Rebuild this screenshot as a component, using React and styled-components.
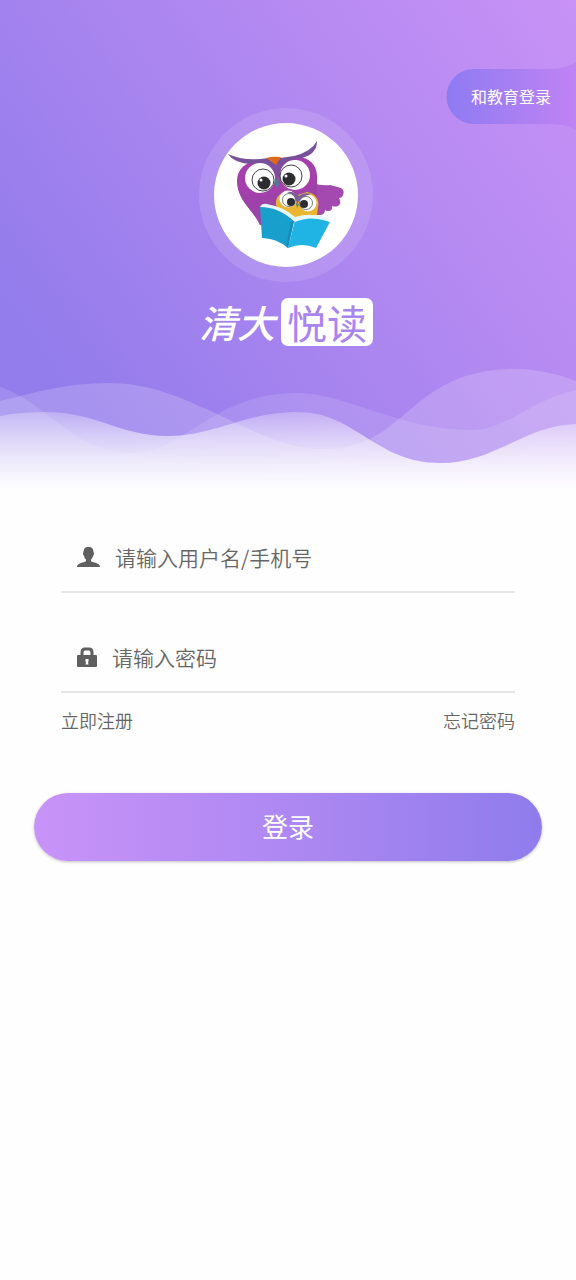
import React from "react";
import styled, { createGlobalStyle } from "styled-components";

const GlobalStyle = createGlobalStyle`
* {
    box-sizing: border-box;
}
body {
    margin: 0;
    background: #fefefe;
    font-family: "Noto Sans CJK SC", "Noto Sans", sans-serif;
}
button, input {
    font-family: inherit;
}`

const OwlLogo = () => (
    <svg width="144" height="144" viewBox="0 0 144 144" aria-hidden="true">
        <circle cx="72" cy="72" r="72" fill="#fff"/>
        {/* wing */}
        <path d="M98 60 Q108 63 116 62 Q124 64 127 65 Q131 68 129 72 Q128 75 125 75 Q128 80 124 83 Q121 84 118 83 Q119 88 114 88 Q112 88 111 87 Q111 91 107 92 L92 92Z" fill="#a349b0"/>
        {/* body */}
        <path d="M46 102 C40 88 23 77 23 58 C23 45 33 38 44 39 L61 37 L76 35 C92 31 103 40 103 53 L103 88 L94 94 L68 104Z" fill="#a53fac"/>
        <path d="M24 65 C32 75 48 75 61 70 C76 74 92 72 103 60 L103 88 L68 104 L46 102 C40 88 27 80 24 65Z" fill="#9c42a8"/>
        <path d="M47 38 Q62 37 84 34 Q70 42 64 56 Q58 43 47 38Z" fill="#814d9f"/>
        {/* brows */}
        <path d="M14 31 Q31 39 54 35 L62 41 Q47 40 35 41 Q19 39 14 31Z" fill="#77509a"/>
        <path d="M103 18 Q97 29 80 33 L66 35 L64 41 Q76 36 88 35 Q103 31 103 18Z" fill="#77509a"/>
        <path d="M52 35 Q59 33 67 34 L62 42Z" fill="#dc681c"/>
        {/* eyes */}
        <circle cx="46" cy="55" r="15" fill="#fff"/>
        <circle cx="81" cy="52" r="15" fill="#fff"/>
        <circle cx="49" cy="57" r="11" fill="#fff" stroke="#414349" strokeWidth="1"/>
        <circle cx="77" cy="53" r="11" fill="#fff" stroke="#414349" strokeWidth="1"/>
        <circle cx="50" cy="60" r="6.500" fill="#2d2c31"/>
        <circle cx="75" cy="56" r="6.500" fill="#2d2c31"/>
        <circle cx="47" cy="57" r="1.500" fill="#fff"/>
        <circle cx="72" cy="53" r="1.500" fill="#fff"/>
        <path d="M63 54 L66 61 L63 65 L60 60Z" fill="#4d7b91"/>
        {/* owlet */}
        <path d="M62 82 C61 73 68 68 76 69 L84 72 L93 69 C101 70 106 77 104 84 L103 92 L81 98 L64 91Z" fill="#eab531"/>
        <circle cx="74" cy="76" r="8.500" fill="#fff"/>
        <circle cx="94" cy="80" r="8.500" fill="#fff"/>
        <path d="M73 69 Q80 68 85 73 Q90 69 97 71 Q87 73 83 81 Q81 71 73 69Z" fill="#77609b"/>
        <circle cx="75" cy="77" r="6.500" fill="#fff" stroke="#414349" strokeWidth="0.700"/>
        <circle cx="92" cy="80" r="6.500" fill="#fff" stroke="#414349" strokeWidth="0.700"/>
        <circle cx="77" cy="79" r="4" fill="#2d2c31"/>
        <circle cx="90" cy="81" r="4" fill="#2d2c31"/>
        <path d="M82 80 L85 81 L83 85Z" fill="#4d7b91"/>
        {/* book */}
        <path d="M46 84 Q65 83 80 98 L74 125 Q62 115 48 115Z" fill="#199fcb"/>
        <path d="M81 97 Q98 92 116 99 L102 125 Q88 119 74 125Z" fill="#20b4e4"/>
        <path d="M46 84 Q48 80 53 81 Q70 84 81 94 Q97 89 114 95 L116 99 Q97 92 81 99 Q65 84 46 84Z" fill="#e4f8fc"/>
        <path d="M80 98 L74 125 L72 123 L77 99Z" fill="#168ebc"/>
    </svg>
)

const Waves = () => (
    <WavesStyle viewBox="0 360 576 130" preserveAspectRatio="none" aria-hidden="true">
        <defs>
            <linearGradient id="fade" gradientUnits="userSpaceOnUse" x1="0" y1="410" x2="0" y2="490">
                <stop offset="0" stopColor="#fff" stopOpacity="0.24"/>
                <stop offset="0.35" stopColor="#fff" stopOpacity="0.56"/>
                <stop offset="0.7" stopColor="#fff" stopOpacity="0.82"/>
                <stop offset="1" stopColor="#fefefe"/>
            </linearGradient>
        </defs>
        <path d="M0 401 C36 392 68 383 108 383 C155 383 190 402 215 413 C255 432 285 449 325 449 C408 449 408 369 515 369 C538 369 560 375 576 381 V490 H0Z" fill="#fff" fillOpacity="0.18"/>
        <path d="M0 387 C48 403 75 453 130 453 C188 453 210 393 298 393 C345 393 400 430 470 430 C508 430 530 400 576 390 V490 H0Z" fill="#fff" fillOpacity="0.12"/>
        <path d="M0 416 C15 413 30 412 45 412 C96 412 120 436 168 436 C215 436 245 412 298 412 C355 412 376 463 440 463 C495 463 525 425 576 424 V490 H0Z" fill="url(#fade)"/>
    </WavesStyle>
)

const UserIcon = () => (
    <svg width="23" height="20" viewBox="0 0 23 20" fill="#5f5f5f" aria-hidden="true">
        <path d="M11.500 0 C15 0 16.500 2 16.500 5 C17.500 6 17 8 16 9 C15.500 11 15 12 14 12.500 V14 C16 16 23 15.500 23 20 H0 C0 15.500 7 16 9 14 V12.500 C8 12 7.500 11 7 9 C6 8 5.500 6 6.500 5 C6.500 2 8 0 11.500 0Z"/>
    </svg>
)

const LockIcon = () => (
    <svg width="20" height="20" viewBox="0 0 20 20" aria-hidden="true">
        <path d="M5 9 V5.500 Q5 2 8 2 H12 Q15 2 15 5.500 V9" fill="none" stroke="#5f5f5f" strokeWidth="3"/>
        <rect y="8" width="20" height="12" rx="1" fill="#5f5f5f"/>
        <path d="M8.500 12 H11.500 V14.500 L11 15 L11.500 17.500 H8.500 L9 15 L8.500 14.500Z" fill="#fff"/>
    </svg>
)

const Field = (props) => {
    return (
        <FieldStyle htmlFor={props.id}>
            {props.icon}
            <input id={props.id} type={props.type} placeholder={props.placeholder} aria-label={props.placeholder}/>
        </FieldStyle>
    )
}

const App = () => {
    return (
        <main>
            <GlobalStyle/>
            <Hero>
                <PartnerLogin type="button">
                    <svg width="130" height="68" viewBox="0 0 130 68" aria-hidden="true">
                        <defs>
                            <linearGradient id="partner">
                                <stop offset="0" stopColor="#8e7bf2"/>
                                <stop offset="1" stopColor="#c083f4"/>
                            </linearGradient>
                        </defs>
                        <path d="M130 0 Q120 7 104 7 H28 A27.500 27.500 0 0 0 28 62 H104 Q120 62 130 68Z" fill="url(#partner)"/>
                    </svg>
                    <span>和教育登录</span>
                </PartnerLogin>
                <LogoRing>
                    <OwlLogo/>
                </LogoRing>
                <Brand>
                    <BrandScript>清大</BrandScript>
                    <BrandBox>悦读</BrandBox>
                </Brand>
                <Waves/>
            </Hero>
            <Form onSubmit={(e) => e.preventDefault()}>
                <Fields>
                    <Field id="username" type="text" placeholder="请输入用户名/手机号" icon={<UserIcon/>}/>
                    <Field id="password" type="password" placeholder="请输入密码" icon={<LockIcon/>}/>
                </Fields>
                <Links>
                    <a href="#register">立即注册</a>
                    <a href="#forgot">忘记密码</a>
                </Links>
                <LoginButton type="submit">登录</LoginButton>
            </Form>
        </main>
    )
}

const Hero = styled.header`
position: relative;
display: flex;
flex-direction: column;
align-items: center;
padding-top: 108px;
background: linear-gradient(55deg, #937cec 15%, #a985ef 48%, #c892f6 100%);`

const PartnerLogin = styled.button`
position: absolute;
top: 62px;
right: 0;
display: grid;
align-items: center;
padding: 0;
border: 0;
background: none;
color: #fff;
font-size: 16px;
line-height: 24px;
cursor: pointer;
svg, span {
    grid-area: 1 / 1;
}`

const LogoRing = styled.div`
display: flex;
margin-right: 4px;
padding: 15px;
border-radius: 50%;
background: rgba(255, 255, 255, 0.12);`

const Brand = styled.h1`
display: flex;
align-items: center;
gap: 6px;
margin: 16px 4px 0 0;
font-weight: 400;
line-height: 48px;`

const BrandScript = styled.span`
color: #fff;
font-size: 38px;
font-style: italic;
font-weight: 500;`

const BrandBox = styled.span`
padding: 0 6px;
border-radius: 7px;
background: #fff;
color: #a985ef;
font-size: 40px;
font-weight: 400;`

const WavesStyle = styled.svg`
display: block;
width: 100%;
height: 130px;
margin-top: 14px;`

const Form = styled.form`
display: flex;
flex-direction: column;
padding: 33px 34px;`

const Fields = styled.div`
display: flex;
flex-direction: column;
gap: 30px;
padding: 0 27px;`

const FieldStyle = styled.label`
display: flex;
align-items: center;
gap: 15px;
height: 70px;
padding-left: 16px;
border-bottom: 2px solid #e6e6e6;
svg {
    flex: none;
}
input {
    flex: 1;
    min-width: 0;
    padding: 0;
    border: 0;
    outline: 0;
    background: none;
    color: #666;
    font-size: 21px;
    font-weight: 350;
    line-height: 32px;
}
input::placeholder {
    color: #666;
    opacity: 1;
}`

const Links = styled.div`
display: flex;
justify-content: space-between;
padding: 13px 27px 0;
a {
    color: #666;
    font-size: 18px;
    font-weight: 350;
    line-height: 28px;
    text-decoration: none;
}`

const LoginButton = styled.button`
height: 68px;
margin-top: 59px;
padding: 0 0 3px;
border: 0;
border-radius: 34px;
background: linear-gradient(90deg, #c893f8, #ab87f1 55%, #8f7cec);
box-shadow: 0 1px 3px rgba(0, 0, 0, 0.25);
color: #fff;
font-size: 26px;
cursor: pointer;`

export default App;
